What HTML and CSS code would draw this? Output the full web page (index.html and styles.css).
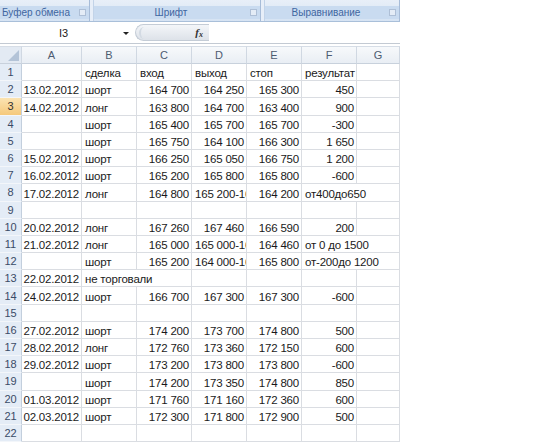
FILE: index.html
```html
<!DOCTYPE html>
<html lang="ru">
<head>
<meta charset="utf-8">
<link rel="stylesheet" href="styles.css">
</head>
<body>
<div class="app">
  <div class="ribbon">
    <div class="group g1"><div class="glabel"><span>Буфер обмена</span><i class="launch"></i></div></div>
    <div class="group g2"><div class="glabel"><span class="center">Шрифт</span><i class="launch"></i></div></div>
    <div class="group g3"><div class="glabel"><span class="center">Выравнивание</span><i class="launch"></i></div></div>
  </div>
  <div class="fbar">
    <div class="namebox"><span class="name">I3</span><span class="drop"></span></div>
    <div class="fxpill"><span class="knob"></span><span class="fx">f<sub>x</sub></span></div>
    <div class="finput"></div>
  </div>
  <div class="sheet">
    <div class="ch corner"><span class="tri"></span></div>
    <div class="ch">A</div><div class="ch">B</div><div class="ch">C</div><div class="ch">D</div><div class="ch">E</div><div class="ch">F</div><div class="ch">G</div>

    <div class="rh">1</div><div class="c"></div><div class="c">сделка</div><div class="c">вход</div><div class="c">выход</div><div class="c">стоп</div><div class="c">результат</div><div class="c"></div>
    <div class="rh">2</div><div class="c r">13.02.2012</div><div class="c">шорт</div><div class="c r">164 700</div><div class="c r">164 250</div><div class="c r">165 300</div><div class="c r">450</div><div class="c"></div>
    <div class="rh sel">3</div><div class="c r">14.02.2012</div><div class="c">лонг</div><div class="c r">163 800</div><div class="c r">164 700</div><div class="c r">163 400</div><div class="c r">900</div><div class="c"></div>
    <div class="rh">4</div><div class="c"></div><div class="c">шорт</div><div class="c r">165 400</div><div class="c r">165 700</div><div class="c r">165 700</div><div class="c r">-300</div><div class="c"></div>
    <div class="rh">5</div><div class="c"></div><div class="c">шорт</div><div class="c r">165 750</div><div class="c r">164 100</div><div class="c r">166 300</div><div class="c r">1 650</div><div class="c"></div>
    <div class="rh">6</div><div class="c r">15.02.2012</div><div class="c">шорт</div><div class="c r">166 250</div><div class="c r">165 050</div><div class="c r">166 750</div><div class="c r">1 200</div><div class="c"></div>
    <div class="rh">7</div><div class="c r">16.02.2012</div><div class="c">шорт</div><div class="c r">165 200</div><div class="c r">165 800</div><div class="c r">165 800</div><div class="c r">-600</div><div class="c"></div>
    <div class="rh">8</div><div class="c r">17.02.2012</div><div class="c">лонг</div><div class="c r">164 800</div><div class="c">165 200-16</div><div class="c r">164 200</div><div class="c s2">от400до650</div>
    <div class="rh">9</div><div class="c"></div><div class="c"></div><div class="c"></div><div class="c"></div><div class="c"></div><div class="c"></div><div class="c"></div>
    <div class="rh">10</div><div class="c r">20.02.2012</div><div class="c">лонг</div><div class="c r">167 260</div><div class="c r">167 460</div><div class="c r">166 590</div><div class="c r">200</div><div class="c"></div>
    <div class="rh">11</div><div class="c r">21.02.2012</div><div class="c">лонг</div><div class="c r">165 000</div><div class="c">165 000-16</div><div class="c r">164 460</div><div class="c s2">от 0 до 1500</div>
    <div class="rh">12</div><div class="c"></div><div class="c">шорт</div><div class="c r">165 200</div><div class="c">164 000-16</div><div class="c r">165 800</div><div class="c s2">от-200до 1200</div>
    <div class="rh">13</div><div class="c r">22.02.2012</div><div class="c s2">не торговали</div><div class="c"></div><div class="c"></div><div class="c"></div><div class="c"></div>
    <div class="rh">14</div><div class="c r">24.02.2012</div><div class="c">шорт</div><div class="c r">166 700</div><div class="c r">167 300</div><div class="c r">167 300</div><div class="c r">-600</div><div class="c"></div>
    <div class="rh">15</div><div class="c"></div><div class="c"></div><div class="c"></div><div class="c"></div><div class="c"></div><div class="c"></div><div class="c"></div>
    <div class="rh">16</div><div class="c r">27.02.2012</div><div class="c">шорт</div><div class="c r">174 200</div><div class="c r">173 700</div><div class="c r">174 800</div><div class="c r">500</div><div class="c"></div>
    <div class="rh">17</div><div class="c r">28.02.2012</div><div class="c">лонг</div><div class="c r">172 760</div><div class="c r">173 360</div><div class="c r">172 150</div><div class="c r">600</div><div class="c"></div>
    <div class="rh">18</div><div class="c r">29.02.2012</div><div class="c">шорт</div><div class="c r">173 200</div><div class="c r">173 800</div><div class="c r">173 800</div><div class="c r">-600</div><div class="c"></div>
    <div class="rh">19</div><div class="c"></div><div class="c">шорт</div><div class="c r">174 200</div><div class="c r">173 350</div><div class="c r">174 800</div><div class="c r">850</div><div class="c"></div>
    <div class="rh">20</div><div class="c r">01.03.2012</div><div class="c">шорт</div><div class="c r">171 760</div><div class="c r">171 160</div><div class="c r">172 360</div><div class="c r">600</div><div class="c"></div>
    <div class="rh">21</div><div class="c r">02.03.2012</div><div class="c">шорт</div><div class="c r">172 300</div><div class="c r">171 800</div><div class="c r">172 900</div><div class="c r">500</div><div class="c"></div>
    <div class="rh">22</div><div class="c"></div><div class="c"></div><div class="c"></div><div class="c"></div><div class="c"></div><div class="c"></div><div class="c"></div>
  </div>
</div>
</body>
</html>
```
FILE: styles.css
```css
html, body {
  margin: 0;
  padding: 0;
  background: #ffffff;
}
body {
  width: 550px;
  height: 443px;
  overflow: hidden;
  font-family: "Liberation Sans", Arial, sans-serif;
}
.app {
  width: 400px;
}

/* ribbon */
.ribbon {
  display: flex;
  height: 22px;
  background: #e7eef8;
  border-bottom: 1px solid #a9bfd9;
  box-sizing: border-box;
  gap: 3px;
}
.group {
  display: flex;
  flex-direction: column;
  justify-content: flex-end;
  background: linear-gradient(#e8eff8, #d6e3f3);
  border-left: 1px solid #c2d3e8;
  border-right: 1px solid #a7bcd8;
  box-sizing: border-box;
}
.g1 { width: 90px; border-left: none; }
.g2 { width: 168px; }
.g3 { flex: 1; }
.glabel {
  position: relative;
  height: 13px;
  margin-bottom: 2px;
  background: #c9dbf0;
  font-size: 10px;
  line-height: 13px;
  color: #3f66a0;
  display: flex;
  padding-left: 2px;
}
.glabel .center {
  flex: 1;
  text-align: center;
  padding-right: 14px;
}
.launch {
  position: absolute;
  right: 3px;
  top: 3px;
  width: 5px;
  height: 5px;
  border: 1px solid #aebfd6;
  background: #e4ecf6;
}

/* formula bar */
.fbar {
  display: flex;
  height: 21px;
  margin-top: 1px;
  border-bottom: 1px solid #c3cad3;
  box-sizing: border-box;
  align-items: stretch;
}
.namebox {
  width: 133px;
  display: flex;
  align-items: center;
  font-size: 11px;
  color: #222;
}
.name {
  flex: 1;
  text-align: center;
  padding-left: 4px;
}
.drop {
  width: 0;
  height: 0;
  border-left: 3px solid transparent;
  border-right: 3px solid transparent;
  border-top: 3px solid #222;
  margin-right: 4px;
}
.fxpill {
  width: 74px;
  margin: 1px 0 2px 2px;
  border-radius: 9px 0 0 9px;
  background: linear-gradient(#f4f6f9, #dde2e9);
  border: 1px solid #c4ccd6;
  border-right: none;
  box-sizing: border-box;
  display: flex;
  align-items: center;
  justify-content: space-between;
  padding: 0 6px 0 3px;
}
.knob {
  width: 10px;
  height: 12px;
  border-radius: 50%;
  border-left: 2px solid #d3dae3;
  box-sizing: border-box;
}
.fx {
  font-family: "Liberation Serif", serif;
  font-style: italic;
  font-weight: bold;
  font-size: 11px;
  color: #333;
}
.fx sub {
  font-size: 8px;
  vertical-align: -1px;
}
.finput {
  flex: 1;
  background: #fff;
}

/* sheet */
.sheet {
  display: grid;
  grid-template-columns: 22px 60px repeat(5, 55px) 43px;
  grid-template-rows: 18px;
  grid-auto-rows: 17.2px;
  margin-top: 2px;
  font-size: 11.5px;
  letter-spacing: -0.2px;
  color: #1a1a1a;
}
.ch {
  background: linear-gradient(#f7f9fb, #e9eef4);
  border-right: 1px solid #d0d8e2;
  border-bottom: 1px solid #c8d1dc;
  border-top: 1px solid #d6dde6;
  box-sizing: border-box;
  display: flex;
  align-items: center;
  justify-content: center;
  color: #4d5b70;
  font-size: 11px;
  letter-spacing: 0;
}
.corner {
  position: relative;
  background: #e3eaf3;
}
.tri {
  position: absolute;
  right: 2px;
  bottom: 2px;
  width: 0;
  height: 0;
  border-left: 11px solid transparent;
  border-bottom: 11px solid #b3c3d7;
}
.rh {
  background: #e4ecf6;
  border-right: 1px solid #c3cfdd;
  border-bottom: 1px solid #f3f6fa;
  box-sizing: border-box;
  display: flex;
  align-items: center;
  justify-content: center;
  color: #3a4b66;
  font-size: 11px;
  letter-spacing: 0;
}
.rh.sel {
  background: linear-gradient(#fbe3b2, #f5c97c);
  color: #333;
}
.c {
  border-right: 1px solid #dadde2;
  border-bottom: 1px solid #dadde2;
  box-sizing: border-box;
  display: flex;
  align-items: flex-end;
  padding: 0 2px 0 3px;
  line-height: 13px;
  white-space: nowrap;
  overflow: hidden;
}
.c.r {
  justify-content: flex-end;
}
.c.s2 {
  grid-column: span 2;
}
```
